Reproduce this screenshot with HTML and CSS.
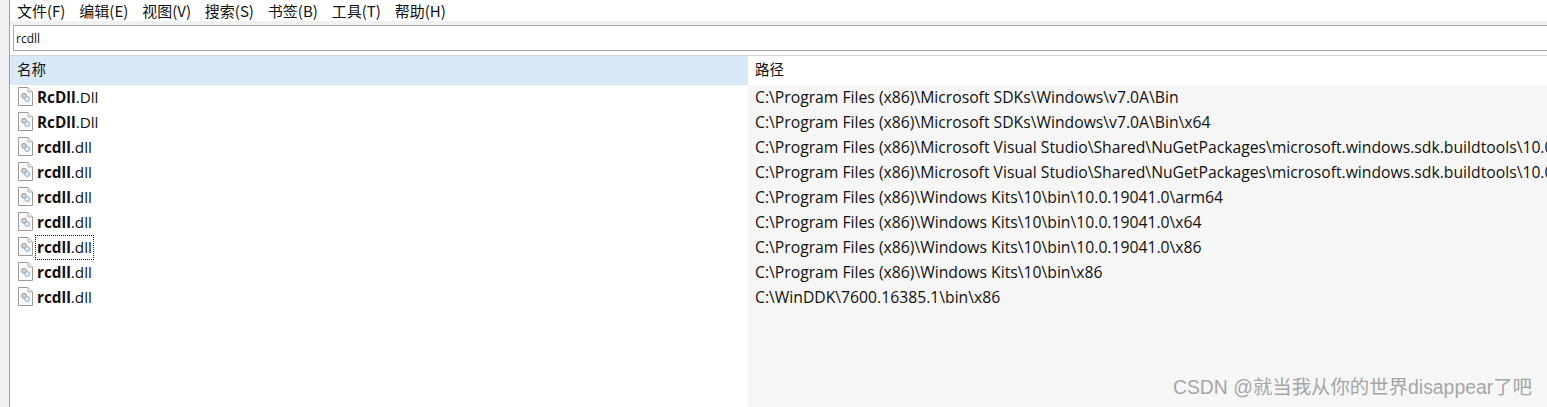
FILE: index.html
```
<!DOCTYPE html>
<html lang="zh">
<head>
<meta charset="utf-8">
<title>rcdll</title>
<link rel="stylesheet" href="styles.css">
</head>
<body>
<svg class="defs" width="0" height="0" aria-hidden="true">
  <symbol id="dll" viewBox="0 0 15 19">
    <path d="M.5.5H10L14.5 5V18.5H.5Z" fill="#fafafa" stroke="#9a9a9a"/>
    <path d="M10 .5V5H14.5" fill="#e8e8e8" stroke="#b4b4b4"/>
    <circle cx="6" cy="8.8" r="2.5" fill="#c4c4c4" stroke="#a6a6a6"/>
    <circle cx="6" cy="8.8" r=".8" fill="#f2f2f2"/>
    <circle cx="9.2" cy="12" r="2.5" fill="#d6e4f0" stroke="#8fb6d6"/>
    <circle cx="9.2" cy="12" r=".8" fill="#fff"/>
  </symbol>
</svg>
<div class="window">
  <div class="gutter"></div>
  <div class="main">
    <nav class="menu">
      <span class="menu-item">文件(F)</span>
      <span class="menu-item">编辑(E)</span>
      <span class="menu-item">视图(V)</span>
      <span class="menu-item">搜索(S)</span>
      <span class="menu-item">书签(B)</span>
      <span class="menu-item">工具(T)</span>
      <span class="menu-item">帮助(H)</span>
    </nav>
    <div class="search-wrap"><div class="search">rcdll</div></div>
    <div class="table">
      <div class="col-name">
        <div class="head head-name">名称</div>
        <div class="row"><svg class="icon"><use href="#dll"/></svg><span class="fname"><b>RcDll</b>.Dll</span></div>
        <div class="row"><svg class="icon"><use href="#dll"/></svg><span class="fname"><b>RcDll</b>.Dll</span></div>
        <div class="row"><svg class="icon"><use href="#dll"/></svg><span class="fname"><b>rcdll</b>.dll</span></div>
        <div class="row"><svg class="icon"><use href="#dll"/></svg><span class="fname"><b>rcdll</b>.dll</span></div>
        <div class="row"><svg class="icon"><use href="#dll"/></svg><span class="fname"><b>rcdll</b>.dll</span></div>
        <div class="row"><svg class="icon"><use href="#dll"/></svg><span class="fname"><b>rcdll</b>.dll</span></div>
        <div class="row"><svg class="icon"><use href="#dll"/></svg><span class="fname focused"><b>rcdll</b>.dll</span></div>
        <div class="row"><svg class="icon"><use href="#dll"/></svg><span class="fname"><b>rcdll</b>.dll</span></div>
        <div class="row"><svg class="icon"><use href="#dll"/></svg><span class="fname"><b>rcdll</b>.dll</span></div>
      </div>
      <div class="col-path">
        <div class="head head-path">路径</div>
        <div class="paths">
          <div class="row path">C:\Program Files (x86)\Microsoft SDKs\Windows\v7.0A\Bin</div>
          <div class="row path">C:\Program Files (x86)\Microsoft SDKs\Windows\v7.0A\Bin\x64</div>
          <div class="row path">C:\Program Files (x86)\Microsoft Visual Studio\Shared\NuGetPackages\microsoft.windows.sdk.buildtools\10.0</div>
          <div class="row path">C:\Program Files (x86)\Microsoft Visual Studio\Shared\NuGetPackages\microsoft.windows.sdk.buildtools\10.0</div>
          <div class="row path">C:\Program Files (x86)\Windows Kits\10\bin\10.0.19041.0\arm64</div>
          <div class="row path">C:\Program Files (x86)\Windows Kits\10\bin\10.0.19041.0\x64</div>
          <div class="row path">C:\Program Files (x86)\Windows Kits\10\bin\10.0.19041.0\x86</div>
          <div class="row path">C:\Program Files (x86)\Windows Kits\10\bin\x86</div>
          <div class="row path">C:\WinDDK\7600.16385.1\bin\x86</div>
          <div class="watermark">CSDN @就当我从你的世界disappear了吧</div>
        </div>
      </div>
    </div>
  </div>
</div>
</body>
</html>
```
FILE: styles.css
```
html, body {
  margin: 0;
  height: 100%;
  overflow: hidden;
  background: #fff;
}
.defs { position: absolute; }
.window {
  display: flex;
  height: 407px;
  font-family: "Open Sans", "Noto Sans CJK SC", sans-serif;
  font-size: 15.73px;
  color: #111;
}
.gutter {
  flex: 0 0 9px;
  background: #f0f0f0;
  border-right: 1px solid #a0a0a0;
}
.main {
  flex: 1;
  min-width: 0;
  display: flex;
  flex-direction: column;
}
.menu {
  display: flex;
  box-sizing: border-box;
  height: 25px;
  padding: 0 0 0 7px;
  gap: 13.9px;
  align-items: center;
  border-bottom: 4px solid #f0f0f0;
  background: #fff;
  font-family: "Noto Sans CJK SC", sans-serif;
  font-size: 15px;
  white-space: nowrap;
}
.search-wrap {
  background: #fff;
  padding: 0 0 4px 3px;
}
.search {
  height: 24px;
  line-height: 25px;
  border: solid #a9a9a9;
  border-width: 1px 0 1px 1px;
  background: #fff;
  padding-left: 2px;
  font-size: 12px;
}
.table {
  flex: 1;
  display: flex;
  min-height: 0;
  border-top: 1px solid #d5d5d5;
}
.col-name { flex: 0 0 738px; }
.col-path {
  flex: 1;
  min-width: 0;
  display: flex;
  flex-direction: column;
}
.head {
  height: 29px;
  line-height: 26px;
  padding-left: 7px;
  font-family: "Noto Sans CJK SC", sans-serif;
  font-size: 14.5px;
}
.head-name { background: #d9e9f7; }
.paths {
  flex: 1;
  background: #f6f6f6;
  position: relative;
  overflow: hidden;
}
.row {
  display: flex;
  align-items: center;
  height: 25px;
  white-space: nowrap;
}
.col-name .row { padding-left: 8px; }
.path {
  box-sizing: border-box;
  padding: 0 0 1px 7px;
}
.icon {
  width: 15px;
  height: 19px;
  flex: none;
  margin: -2px 2px 0 0;
}
.fname {
  box-sizing: border-box;
  height: 25px;
  font-size: 15.3px;
  padding: 0 1px;
  border: 1px dotted transparent;
  line-height: 23px;
}
.fname b { font-weight: 700; }
.focused { border-color: #222; }
.watermark {
  position: absolute;
  right: 15px;
  bottom: 7px;
  font-family: "Liberation Sans", "Noto Sans CJK SC", sans-serif;
  font-size: 19.4px;
  color: #a6a6a6;
  white-space: nowrap;
}
```
